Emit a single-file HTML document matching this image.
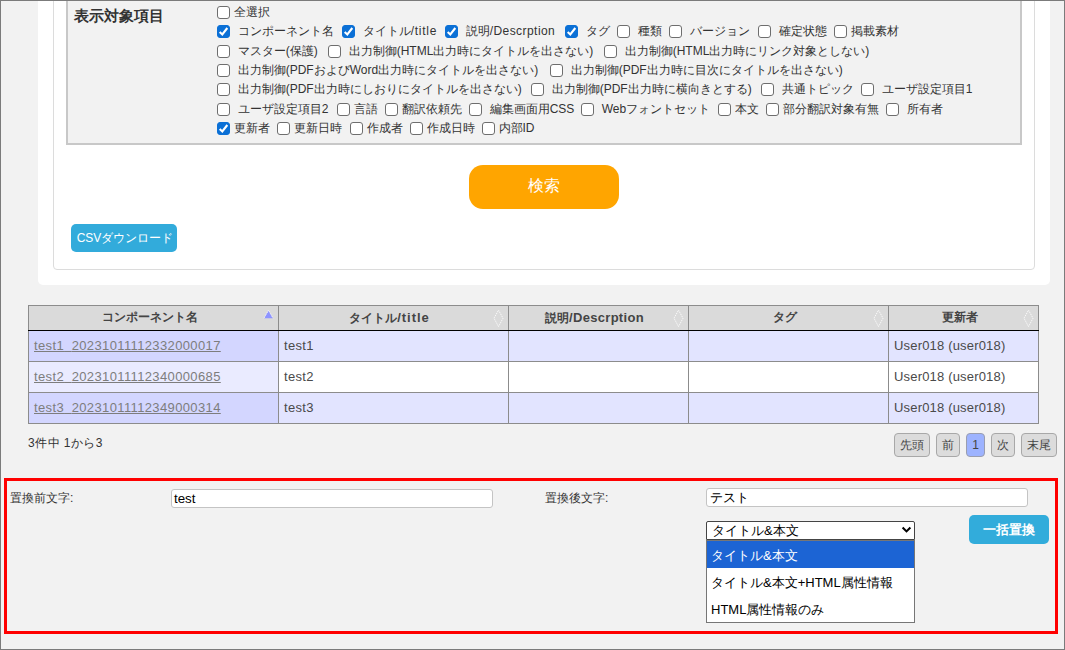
<!DOCTYPE html>
<html><head><meta charset="utf-8">
<style>
*{box-sizing:border-box}
html,body{margin:0;padding:0}
body{width:1065px;height:650px;overflow:hidden;position:relative;background:#f2f2f2;font-family:"Liberation Sans",sans-serif;color:#333;font-size:12px}
.frame{position:absolute;left:0;top:0;width:1065px;height:650px;border:1px solid #7b7b7b;z-index:50}
.abs{position:absolute}
.white{left:38px;top:-10px;width:1012px;height:295px;background:#fff;border-radius:0 0 5px 5px}
.ibox{left:53px;top:-10px;width:982px;height:280px;border:1px solid #dcdcdc;border-radius:0 0 4px 4px}
.spanel{left:66px;top:-10px;width:956px;height:155px;border:2px solid #c8c8c8;border-top:none;background:#f2f2f2}
.lbl{left:74px;top:6px;font-size:15px;font-weight:bold;color:#333;line-height:20px;white-space:nowrap}
.cb{position:absolute;width:13px;height:13px;border:1px solid #6e6e6e;border-radius:3px;background:#fff}
.cb.on{background:#0b70d6;border-color:#0b70d6}
.cb.on svg{position:absolute;left:-1px;top:-1px}
.t{position:absolute;white-space:nowrap;line-height:19px;font-size:12px;color:#333}
.btn-search{left:469px;top:165px;width:150px;height:44px;background:#ffa500;border-radius:14px;color:#fff;font-size:16px;text-align:center;line-height:42px}
.btn-csv{left:71px;top:224px;width:106px;height:28px;background:#32abdb;border-radius:5px;color:#fff;font-size:12px;text-align:center;line-height:28px;white-space:nowrap;padding-left:2px}
.r{position:absolute}
.th{position:absolute;font-weight:bold;font-size:12px;color:#444;text-align:center;line-height:25px;white-space:nowrap}
.td{position:absolute;font-size:13px;color:#4a4a4a;line-height:30px;white-space:nowrap}
.td a{color:#7d7d7d;text-decoration:underline;letter-spacing:0.37px}
.info{left:28px;top:434px;letter-spacing:0.45px;font-size:12px;line-height:19px;color:#333;white-space:nowrap}
.pg{position:absolute;top:433px;height:24px;border:1px solid #a8a8a8;border-radius:4px;background:#dcdcdc;color:#444;font-size:12px;line-height:22px;text-align:center;white-space:nowrap}
.pg.cur{background:#9db3ff;border-color:#9a9eb0}
.redbox{left:4px;top:478px;width:1054px;height:156px;border:3px solid #ff0000}
.lab2{font-size:12px;color:#333;line-height:19px;white-space:nowrap}
.inp{position:absolute;height:19px;background:#fff;border:1px solid #c4c4c4;border-radius:3px;font-size:13.33px;color:#000;line-height:17px;padding-left:2px;white-space:nowrap}
.sel{left:706px;top:521px;width:209px;height:19px;background:#fff;border:1px solid #444;border-radius:2px 2px 0 0;font-size:13px;color:#000;line-height:17px;padding-left:5px;white-space:nowrap}
.dd{left:706px;top:540px;width:209px;height:83px;background:#fff;border:1px solid #767676}
.dd div{height:27px;line-height:29px;padding-left:4px;font-size:13px;color:#000;white-space:nowrap}
.dd div.hl{background:#1c64d4;color:#fff}
.btn-rep{left:969px;top:515px;width:80px;height:29px;background:#32acdb;border-radius:5px;color:#fff;font-size:13px;font-weight:bold;text-align:center;line-height:30px;padding-left:0px;white-space:nowrap}
</style></head><body>
<div class="frame"></div>
<div class="abs white"></div>
<div class="abs ibox"></div>
<div class="abs spanel"></div>
<div class="abs lbl">表示対象項目</div>
<div class="cb" style="left:217px;top:6px"></div>
<div class="t" style="left:233.5px;top:3px">全選択</div>
<div class="cb on" style="left:217px;top:25px"><svg width="13" height="13" viewBox="0 0 13 13"><path d="M2.7 7.0 L5.3 9.5 L10.3 3.0" stroke="#fff" stroke-width="2.1" fill="none" stroke-linecap="butt"/></svg></div>
<div class="t" style="left:237.7px;top:22px">コンポーネント名</div>
<div class="cb on" style="left:342px;top:25px"><svg width="13" height="13" viewBox="0 0 13 13"><path d="M2.7 7.0 L5.3 9.5 L10.3 3.0" stroke="#fff" stroke-width="2.1" fill="none" stroke-linecap="butt"/></svg></div>
<div class="t" style="left:362.7px;top:22px">タイトル<span style="letter-spacing:0.75px">/title</span></div>
<div class="cb on" style="left:445px;top:25px"><svg width="13" height="13" viewBox="0 0 13 13"><path d="M2.7 7.0 L5.3 9.5 L10.3 3.0" stroke="#fff" stroke-width="2.1" fill="none" stroke-linecap="butt"/></svg></div>
<div class="t" style="left:465.7px;top:22px">説明<span style="letter-spacing:0.44px">/Descrption</span></div>
<div class="cb on" style="left:565px;top:25px"><svg width="13" height="13" viewBox="0 0 13 13"><path d="M2.7 7.0 L5.3 9.5 L10.3 3.0" stroke="#fff" stroke-width="2.1" fill="none" stroke-linecap="butt"/></svg></div>
<div class="t" style="left:585.7px;top:22px">タグ</div>
<div class="cb" style="left:617px;top:25px"></div>
<div class="t" style="left:637.7px;top:22px">種類</div>
<div class="cb" style="left:669px;top:25px"></div>
<div class="t" style="left:689.7px;top:22px">バージョン</div>
<div class="cb" style="left:758px;top:25px"></div>
<div class="t" style="left:778.7px;top:22px">確定状態</div>
<div class="cb" style="left:834px;top:25px"></div>
<div class="t" style="left:850.5px;top:22px">掲載素材</div>
<div class="cb" style="left:217px;top:45px"></div>
<div class="t" style="left:237.7px;top:42px">マスター(保護)</div>
<div class="cb" style="left:328px;top:45px"></div>
<div class="t" style="left:348.7px;top:42px">出力制御(HTML出力時にタイトルを出さない)</div>
<div class="cb" style="left:604px;top:45px"></div>
<div class="t" style="left:624.7px;top:42px">出力制御(HTML出力時にリンク対象としない)</div>
<div class="cb" style="left:217px;top:64px"></div>
<div class="t" style="left:237.7px;top:61px">出力制御(PDFおよびWord出力時にタイトルを出さない)</div>
<div class="cb" style="left:550px;top:64px"></div>
<div class="t" style="left:570.7px;top:61px">出力制御(PDF出力時に目次にタイトルを出さない)</div>
<div class="cb" style="left:217px;top:83px"></div>
<div class="t" style="left:237.7px;top:80px">出力制御(PDF出力時にしおりにタイトルを出さない)</div>
<div class="cb" style="left:531px;top:83px"></div>
<div class="t" style="left:551.7px;top:80px">出力制御(PDF出力時に横向きとする)</div>
<div class="cb" style="left:761px;top:83px"></div>
<div class="t" style="left:781.7px;top:80px">共通トピック</div>
<div class="cb" style="left:861px;top:83px"></div>
<div class="t" style="left:881.7px;top:80px">ユーザ設定項目1</div>
<div class="cb" style="left:217px;top:103px"></div>
<div class="t" style="left:237.7px;top:100px">ユーザ設定項目2</div>
<div class="cb" style="left:337px;top:103px"></div>
<div class="t" style="left:353.5px;top:100px">言語</div>
<div class="cb" style="left:385px;top:103px"></div>
<div class="t" style="left:401.5px;top:100px">翻訳依頼先</div>
<div class="cb" style="left:469px;top:103px"></div>
<div class="t" style="left:489.7px;top:100px">編集画面用CSS</div>
<div class="cb" style="left:581px;top:103px"></div>
<div class="t" style="left:601.7px;top:100px">Webフォントセット</div>
<div class="cb" style="left:718px;top:103px"></div>
<div class="t" style="left:734.5px;top:100px">本文</div>
<div class="cb" style="left:766px;top:103px"></div>
<div class="t" style="left:782.5px;top:100px">部分翻訳対象有無</div>
<div class="cb" style="left:886px;top:103px"></div>
<div class="t" style="left:906.7px;top:100px">所有者</div>
<div class="cb on" style="left:217px;top:122px"><svg width="13" height="13" viewBox="0 0 13 13"><path d="M2.7 7.0 L5.3 9.5 L10.3 3.0" stroke="#fff" stroke-width="2.1" fill="none" stroke-linecap="butt"/></svg></div>
<div class="t" style="left:233.5px;top:119px">更新者</div>
<div class="cb" style="left:277px;top:122px"></div>
<div class="t" style="left:293.5px;top:119px">更新日時</div>
<div class="cb" style="left:350px;top:122px"></div>
<div class="t" style="left:366.5px;top:119px">作成者</div>
<div class="cb" style="left:410px;top:122px"></div>
<div class="t" style="left:426.5px;top:119px">作成日時</div>
<div class="cb" style="left:482px;top:122px"></div>
<div class="t" style="left:498.5px;top:119px">内部ID</div>
<div class="abs btn-search">検索</div>
<div class="abs btn-csv">CSVダウンロード</div>
<div class="r" style="left:28px;top:305px;width:1011px;height:26px;background:#dadada;border:1px solid #8c8c8c;border-bottom:1px solid #000"></div>
<div class="r" style="left:28px;top:331px;width:251px;height:31px;background:#d3d6ff"></div>
<div class="r" style="left:279px;top:331px;width:760px;height:31px;background:#e2e4ff"></div>
<div class="r" style="left:28px;top:361px;width:1011px;height:1px;background:#8c8c8c"></div>
<div class="r" style="left:28px;top:362px;width:251px;height:31px;background:#eaebff"></div>
<div class="r" style="left:279px;top:362px;width:760px;height:31px;background:#ffffff"></div>
<div class="r" style="left:28px;top:392px;width:1011px;height:1px;background:#8c8c8c"></div>
<div class="r" style="left:28px;top:393px;width:251px;height:31px;background:#d3d6ff"></div>
<div class="r" style="left:279px;top:393px;width:760px;height:31px;background:#e2e4ff"></div>
<div class="r" style="left:28px;top:423px;width:1011px;height:1px;background:#8c8c8c"></div>
<div class="r" style="left:28px;top:305px;width:1px;height:118px;background:#8c8c8c"></div>
<div class="r" style="left:278px;top:305px;width:1px;height:118px;background:#8c8c8c"></div>
<div class="r" style="left:508px;top:305px;width:1px;height:118px;background:#8c8c8c"></div>
<div class="r" style="left:688px;top:305px;width:1px;height:118px;background:#8c8c8c"></div>
<div class="r" style="left:888px;top:305px;width:1px;height:118px;background:#8c8c8c"></div>
<div class="r" style="left:1038px;top:305px;width:1px;height:118px;background:#8c8c8c"></div>
<div class="r" style="left:28px;top:330px;width:1011px;height:1px;background:#000"></div>
<div class="th" style="left:39px;top:305px;width:221px">コンポーネント名</div>
<div class="th" style="left:289px;top:305px;width:201px">タイトル<span style="font-size:13px;letter-spacing:1.0px">/title</span></div>
<div class="th" style="left:519px;top:305px;width:151px">説明<span style="font-size:13px;letter-spacing:0.3px">/Descrption</span></div>
<div class="th" style="left:699px;top:305px;width:171px">タグ</div>
<div class="th" style="left:899px;top:305px;width:121px">更新者</div>
<svg class="r" style="left:263px;top:309px" width="11" height="11" viewBox="0 0 11 11"><path d="M5.5 1.5 L10 9.2 L1 9.2 Z" fill="#8e94ff"/><path d="M1 9.2 L5.5 1.2 L10 9.2" fill="none" stroke="#fff" stroke-width="0.8" stroke-dasharray="1.2 0.8"/></svg>
<svg class="r" style="left:493px;top:309px" width="11" height="19" viewBox="0 0 11 19"><path d="M5.5 1.2 L10 9.2 L5.5 17.6 L1 9.2 Z" fill="none" stroke="#fff" stroke-width="0.9" stroke-dasharray="1.3 0.9" opacity="0.95"/></svg>
<svg class="r" style="left:673px;top:309px" width="11" height="19" viewBox="0 0 11 19"><path d="M5.5 1.2 L10 9.2 L5.5 17.6 L1 9.2 Z" fill="none" stroke="#fff" stroke-width="0.9" stroke-dasharray="1.3 0.9" opacity="0.95"/></svg>
<svg class="r" style="left:873px;top:309px" width="11" height="19" viewBox="0 0 11 19"><path d="M5.5 1.2 L10 9.2 L5.5 17.6 L1 9.2 Z" fill="none" stroke="#fff" stroke-width="0.9" stroke-dasharray="1.3 0.9" opacity="0.95"/></svg>
<svg class="r" style="left:1023px;top:309px" width="11" height="19" viewBox="0 0 11 19"><path d="M5.5 1.2 L10 9.2 L5.5 17.6 L1 9.2 Z" fill="none" stroke="#fff" stroke-width="0.9" stroke-dasharray="1.3 0.9" opacity="0.95"/></svg>
<div class="td" style="left:34px;top:331px"><a>test1<span style='color:transparent'>_</span>20231011112332000017</a></div>
<div class="td" style="left:284px;top:331px;letter-spacing:0.3px">test1</div>
<div class="td" style="left:894px;top:331px;letter-spacing:0.18px">User018 (user018)</div>
<div class="td" style="left:34px;top:362px"><a>test2<span style='color:transparent'>_</span>20231011112340000685</a></div>
<div class="td" style="left:284px;top:362px;letter-spacing:0.3px">test2</div>
<div class="td" style="left:894px;top:362px;letter-spacing:0.18px">User018 (user018)</div>
<div class="td" style="left:34px;top:393px"><a>test3<span style='color:transparent'>_</span>20231011112349000314</a></div>
<div class="td" style="left:284px;top:393px;letter-spacing:0.3px">test3</div>
<div class="td" style="left:894px;top:393px;letter-spacing:0.18px">User018 (user018)</div>
<div class="abs info">3件中 1から3</div>
<div class="pg" style="left:894px;width:36px">先頭</div>
<div class="pg" style="left:936px;width:24px">前</div>
<div class="pg cur" style="left:966px;width:19px">1</div>
<div class="pg" style="left:991px;width:24px">次</div>
<div class="pg" style="left:1021px;width:36px">末尾</div>
<div class="abs redbox"></div>
<div class="abs lab2" style="left:10px;top:489px">置換前文字:</div>
<div class="inp" style="left:171px;top:489px;width:322px">test</div>
<div class="abs lab2" style="left:545px;top:489px">置換後文字:</div>
<div class="inp" style="left:706px;top:488px;width:322px;padding-left:3px">テスト</div>
<div class="abs sel">タイトル&amp;本文<svg style="position:absolute;left:193.5px;top:4.3px" width="11" height="8" viewBox="0 0 11 8"><path d="M1.6 1.6 L5.5 5.4 L9.4 1.6" stroke="#000" stroke-width="2.1" fill="none"/></svg></div>
<div class="abs dd"><div class="hl">タイトル&amp;本文</div><div>タイトル&amp;本文+HTML属性情報</div><div>HTML属性情報のみ</div></div>
<div class="abs btn-rep">一括置換</div>
</body></html>
